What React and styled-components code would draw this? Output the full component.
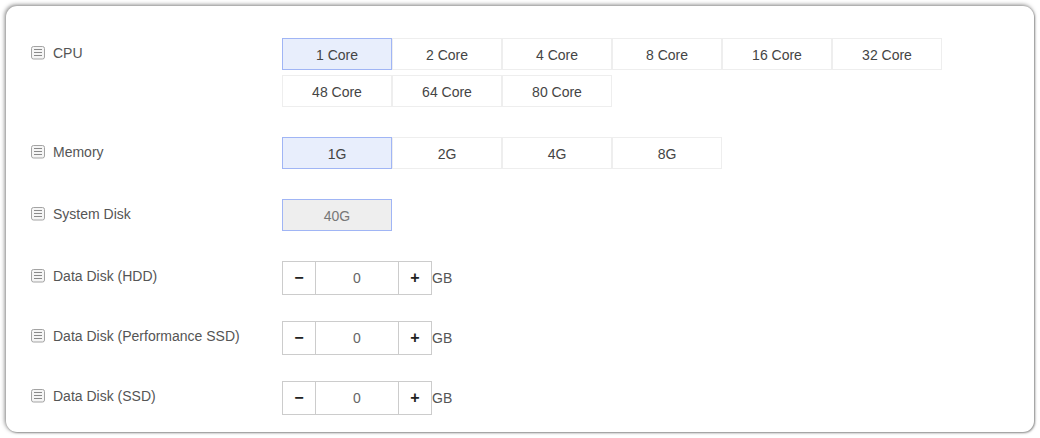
import React from "react";
import styled, { createGlobalStyle } from "styled-components";

const cpuOptions = ["1 Core", "2 Core", "4 Core", "8 Core", "16 Core", "32 Core", "48 Core", "64 Core", "80 Core"];
const memoryOptions = ["1G", "2G", "4G", "8G"];
const dataDisks = ["Data Disk (HDD)", "Data Disk (Performance SSD)", "Data Disk (SSD)"];

const ListIcon = () => (
    <IconBox width="14" height="14" viewBox="0 0 14 14" fill="none">
        <rect x="0.5" y="0.5" width="13" height="12.5" rx="2" stroke="#a3a3a3" fill="#f5f5f5" />
        <path d="M3 3.5H11M3 6.5H11M3 9.5H11" stroke="#8a8a8a" strokeWidth="1" />
    </IconBox>
);

const Label = ({ children }) => (
    <LabelCell>
        <ListIcon />
        <span>{children}</span>
    </LabelCell>
);

const Stepper = () => (
    <StepperWrap>
        <StepButton>−</StepButton>
        <StepValue>0</StepValue>
        <StepButton>+</StepButton>
        <Unit>GB</Unit>
    </StepperWrap>
);

export default function App() {
    return (
        <Page>
            <GlobalStyle />
            <Card>
                <Row>
                    <Label>CPU</Label>
                    <Options>
                        {cpuOptions.map((o, i) => (
                            <Option key={o} $selected={i === 0}>{o}</Option>
                        ))}
                    </Options>
                </Row>
                <Row>
                    <Label>Memory</Label>
                    <Options>
                        {memoryOptions.map((o, i) => (
                            <Option key={o} $selected={i === 0}>{o}</Option>
                        ))}
                    </Options>
                </Row>
                <Row>
                    <Label>System Disk</Label>
                    <Options>
                        <Option $disabled>40G</Option>
                    </Options>
                </Row>
                {dataDisks.map((d) => (
                    <StepperRow key={d}>
                        <Label>{d}</Label>
                        <Stepper />
                    </StepperRow>
                ))}
            </Card>
        </Page>
    );
}

const GlobalStyle = createGlobalStyle`
    body {
        margin: 0;
        background: #fff;
        font-family: "Liberation Sans", Arial, sans-serif;
        font-size: 14px;
        color: #333;
    }
`;

const Page = styled.div`
    box-sizing: border-box;
    width: 1040px;
    height: 438px;
    padding: 6px;
    overflow: hidden;
`;

const Card = styled.div`
    box-sizing: border-box;
    height: 426px;
    padding: 32px 25px 0;
    background: #fff;
    border-radius: 11px;
    box-shadow: -1px -1px 4px rgba(0, 0, 0, 0.5), 1px 1px 2px rgba(0, 0, 0, 0.35);
`;

const Row = styled.div`
    display: grid;
    grid-template-columns: 251px 1fr;
    margin-bottom: 30px;
`;

const StepperRow = styled(Row)`
    margin-bottom: 26px;
`;

const LabelCell = styled.div`
    display: flex;
    align-items: flex-start;
    gap: 8px;
    padding-top: 7px;
    line-height: 16px;
    color: #555;
`;

const IconBox = styled.svg`
    flex: none;
    margin-top: 1px;
`;

const Options = styled.div`
    display: grid;
    grid-template-columns: repeat(6, 110px);
    row-gap: 5px;
`;

const Option = styled.div`
    box-sizing: border-box;
    height: 32px;
    line-height: 32px;
    text-align: center;
    color: ${(p) => (p.$disabled ? "#777" : "#444")};
    background: ${(p) => (p.$disabled ? "#eee" : p.$selected ? "#e8eefc" : "#fff")};
    border: 1px solid ${(p) => (p.$disabled || p.$selected ? "#a0b5f5" : "#eee")};
`;

const StepperWrap = styled.div`
    display: flex;
    align-items: center;
    height: 34px;
`;

const StepButton = styled.div`
    box-sizing: border-box;
    width: 34px;
    height: 34px;
    line-height: 32px;
    text-align: center;
    font-size: 16px;
    font-weight: 700;
    color: #222;
    border: 1px solid #ccc;
`;

const StepValue = styled.div`
    box-sizing: border-box;
    width: 82px;
    height: 34px;
    line-height: 32px;
    text-align: center;
    color: #666;
    border-top: 1px solid #ccc;
    border-bottom: 1px solid #ccc;
`;

const Unit = styled.span`
    color: #555;
`;
